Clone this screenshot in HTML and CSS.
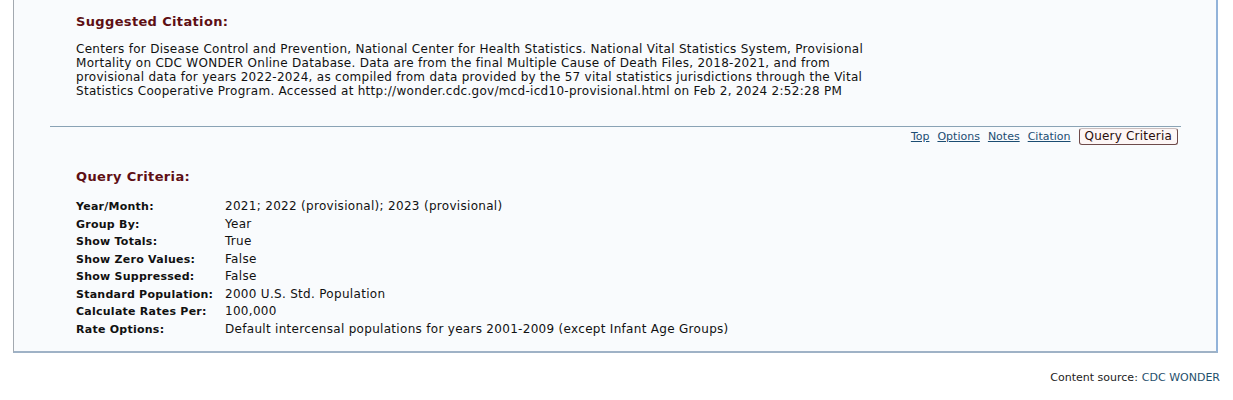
FILE: index.html
```html
<!DOCTYPE html>
<html>
<head>
<meta charset="utf-8">
<link rel="stylesheet" href="styles.css">
</head>
<body>
<div class="panel">
  <div class="inner">
    <h2 class="heading cite-heading">Suggested Citation:</h2>
    <p class="citation">Centers for Disease Control and Prevention, National Center for Health Statistics. National Vital Statistics System, Provisional<br>Mortality on CDC WONDER Online Database. Data are from the final Multiple Cause of Death Files, 2018-2021, and from<br>provisional data for years 2022-2024, as compiled from data provided by the 57 vital statistics jurisdictions through the Vital<br>Statistics Cooperative Program. Accessed at http://wonder.cdc.gov/mcd-icd10-provisional.html on Feb 2, 2024 2:52:28 PM</p>
  </div>
  <div class="divider"></div>
  <div class="nav">
    <a href="#" class="navlink">Top</a>
    <a href="#" class="navlink">Options</a>
    <a href="#" class="navlink">Notes</a>
    <a href="#" class="navlink">Citation</a>
    <span class="navcurrent">Query Criteria</span>
  </div>
  <div class="inner">
    <h2 class="heading qc-heading">Query Criteria:</h2>
    <div class="criteria">
      <div class="label">Year/Month:</div><div class="value">2021; 2022 (provisional); 2023 (provisional)</div>
      <div class="label">Group By:</div><div class="value">Year</div>
      <div class="label">Show Totals:</div><div class="value">True</div>
      <div class="label">Show Zero Values:</div><div class="value">False</div>
      <div class="label">Show Suppressed:</div><div class="value">False</div>
      <div class="label">Standard Population:</div><div class="value">2000 U.S. Std. Population</div>
      <div class="label">Calculate Rates Per:</div><div class="value">100,000</div>
      <div class="label">Rate Options:</div><div class="value">Default intercensal populations for years 2001-2009 (except Infant Age Groups)</div>
    </div>
  </div>
</div>
<div class="source">Content source: <a href="#" class="sourcelink">CDC WONDER</a></div>
</body>
</html>
```

FILE: styles.css
```css
html, body {
  margin: 0;
  padding: 0;
  background: #ffffff;
}
body {
  font-family: "DejaVu Sans", Verdana, sans-serif;
  font-size: 11px;
  color: #111111;
}
.panel {
  margin-left: 13px;
  width: 1202px;
  background: #f9fbfd;
  border-left: 1px solid #a3a9b0;
  border-right: 2px solid #92b3da;
  border-bottom: 2px solid #9fb2c6;
  padding-bottom: 12px;
}
.inner {
  padding-left: 62px;
}
.heading {
  margin: 0;
  font-size: 13px;
  font-weight: bold;
  letter-spacing: 0.35px;
  color: #5e0f14;
}
.cite-heading {
  padding-top: 14px;
}
.citation {
  margin: 13px 0 0 0;
  font-size: 12px;
  letter-spacing: 0.28px;
  line-height: 14px;
}
.divider {
  margin: 28px 0 0 36px;
  width: 1131px;
  height: 1px;
  background: #8aa3b5;
}
.nav {
  display: flex;
  justify-content: flex-end;
  align-items: center;
  gap: 8px;
  width: 1164px;
  margin-top: 1px;
}
.navlink {
  color: #1c4d72;
  text-decoration: underline;
}
.navcurrent {
  margin-left: 0;
  border: 1px solid #6e4a4a;
  border-top-color: #c9bdbd;
  border-radius: 3px;
  background: #fdf6f6;
  color: #2a0d0d;
  font-size: 12px;
  letter-spacing: 0.2px;
  padding: 0 5px 1px 5px;
  line-height: 14px;
}
.qc-heading {
  padding-top: 24px;
}
.criteria {
  margin-top: 14px;
  display: grid;
  grid-template-columns: 149px auto;
  line-height: 17.57px;
}
.label {
  font-weight: bold;
  letter-spacing: 0.25px;
}
.value {
  font-size: 12px;
  letter-spacing: 0.3px;
}
.source {
  display: flex;
  justify-content: flex-end;
  width: 1220px;
  margin-top: 18px;
  font-size: 11px;
  color: #222222;
}
.sourcelink {
  margin-left: 4px;
  color: #1f4f6d;
  text-decoration: none;
}
```
